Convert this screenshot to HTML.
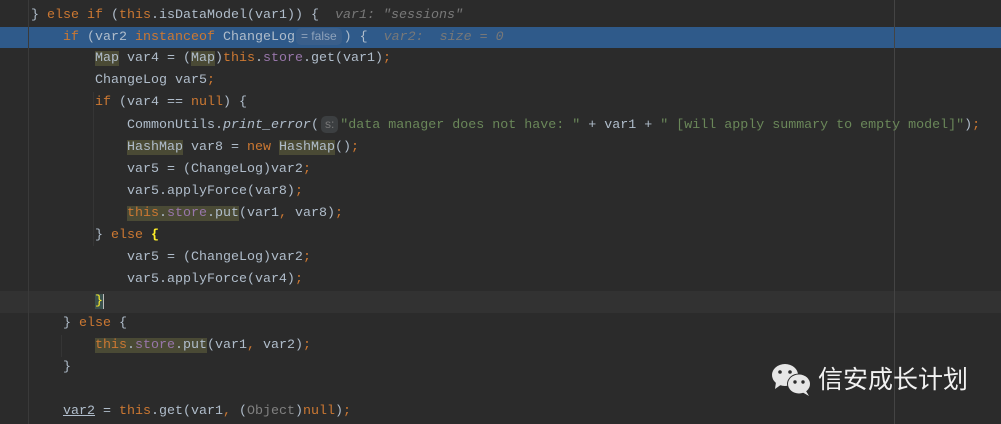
<!DOCTYPE html>
<html><head><meta charset="utf-8"><style>
body{margin:0;width:1001px;height:424px;background:#2b2b2b;overflow:hidden;position:relative;font-family:"Liberation Mono",monospace;font-size:13.33px;color:#b0bdcb}
.l{position:absolute;left:-1px;height:22px;line-height:22px;white-space:pre;width:1001px}
.k{color:#cc7832}.f{color:#9876aa}.s{color:#6a8759}.i{font-style:italic}
.h{color:#787878;font-style:italic}
.u{background:#4a4a35}
.hint{display:inline-block;background:#3c3f41;color:#787878;font-family:"Liberation Sans",sans-serif;font-size:12px;line-height:17px;border-radius:5px;padding:0 4px;margin:0 2px 0 2px;vertical-align:0px}
.g{position:absolute;width:1px;background:#353535}
</style></head><body>
<div style="position:absolute;left:0;top:27px;width:1001px;height:21px;background:#2f5a8a"></div>
<div style="position:absolute;left:0;top:291px;width:1001px;height:22px;background:#323232"></div>
<div class="g" style="left:28px;top:0;height:424px;background:#3a3a3a"></div>
<div class="g" style="left:61px;top:335px;height:22px"></div>
<div class="g" style="left:93px;top:92px;height:154px"></div>
<div class="g" style="left:894px;top:0;height:424px;background:#444"></div>

<div class="l" style="top:5px">    } <span class="k">else if</span> (<span class="k">this</span>.isDataModel(var1)) {  <span class="h">var1: "sessions"</span></div>
<div class="l" style="top:27px">        <span class="k">if</span> (var2 <span class="k">instanceof</span> ChangeLog<span class="hint" style="background:#3a5f8b;color:#8fa3bb;padding:0 5px;margin:0 2px 0 1px">= false</span>) {  <span class="h">var2:  size = 0</span></div>
<div class="l" style="top:48px">            <span class="u">Map</span> var4 = (<span class="u">Map</span>)<span class="k">this</span>.<span class="f">store</span>.get(var1)<span class="k">;</span></div>
<div class="l" style="top:70px">            ChangeLog var5<span class="k">;</span></div>
<div class="l" style="top:92px">            <span class="k">if</span> (var4 == <span class="k">null</span>) {</div>
<div class="l" style="top:115px">                CommonUtils.<span class="i">print_error</span>(<span class="hint">s:</span><span class="s">"data manager does not have: "</span> + var1 + <span class="s">" [will apply summary to empty model]"</span>)<span class="k">;</span></div>
<div class="l" style="top:137px">                <span class="u">HashMap</span> var8 = <span class="k">new</span> <span class="u">HashMap</span>()<span class="k">;</span></div>
<div class="l" style="top:159px">                var5 = (ChangeLog)var2<span class="k">;</span></div>
<div class="l" style="top:181px">                var5.applyForce(var8)<span class="k">;</span></div>
<div class="l" style="top:203px">                <span class="u"><span class="k">this</span>.<span class="f">store</span>.put</span>(var1<span class="k">,</span> var8)<span class="k">;</span></div>
<div class="l" style="top:225px">            } <span class="k">else</span> <span style="color:#ffef28;font-weight:bold">{</span></div>
<div class="l" style="top:247px">                var5 = (ChangeLog)var2<span class="k">;</span></div>
<div class="l" style="top:269px">                var5.applyForce(var4)<span class="k">;</span></div>
<div class="l" style="top:291px">            <span style="color:#ffef28;background:#3b514d">}</span><span style="border-left:1.5px solid #bbb"></span></div>
<div class="l" style="top:313px">        } <span class="k">else</span> {</div>
<div class="l" style="top:335px">            <span class="u"><span class="k">this</span>.<span class="f">store</span>.put</span>(var1<span class="k">,</span> var2)<span class="k">;</span></div>
<div class="l" style="top:357px">        }</div>
<div class="l" style="top:401px">        <span style="text-decoration:underline">var2</span> = <span class="k">this</span>.get(var1<span class="k">,</span> (<span style="color:#808080">Object</span>)<span class="k">null</span>)<span class="k">;</span></div>

<svg style="position:absolute;left:771px;top:362px" width="44" height="36" viewBox="0 0 44 36">
<ellipse cx="14" cy="13" rx="13" ry="11" fill="#e6e6e6"/>
<path d="M5 20 L4 27 L11 22 Z" fill="#e6e6e6"/>
<circle cx="9" cy="10" r="1.8" fill="#2b2b2b"/><circle cx="19" cy="10" r="1.8" fill="#2b2b2b"/>
<ellipse cx="28" cy="22" rx="12" ry="10.5" fill="#2b2b2b"/>
<ellipse cx="28" cy="22" rx="11" ry="9.5" fill="#e6e6e6"/>
<path d="M35 29 L38 34 L31 30 Z" fill="#e6e6e6"/>
<circle cx="24" cy="20" r="1.7" fill="#2b2b2b"/><circle cx="32" cy="20" r="1.7" fill="#2b2b2b"/>
</svg>
<div style="position:absolute;left:818px;top:362px;font-family:'Noto Sans CJK SC',sans-serif;font-size:25px;line-height:32px;color:#f2f2f2">信安成长计划</div>
</body></html>
